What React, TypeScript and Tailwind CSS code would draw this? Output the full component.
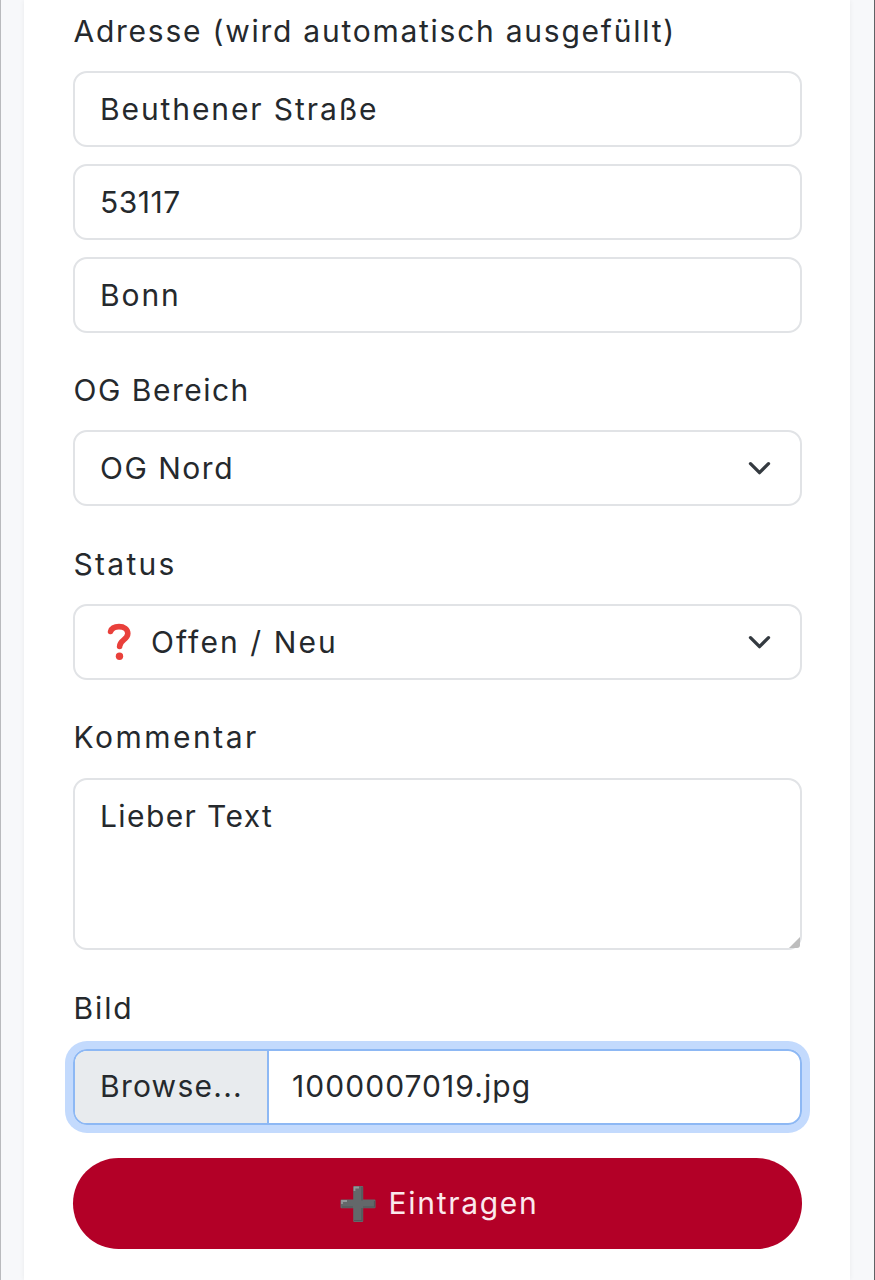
import type { ReactNode } from "react";

function Label({ children, className }: { children: ReactNode; className: string }) {
  return <label className={`block whitespace-nowrap pl-[0.5px] leading-[40px] ${className}`}>{children}</label>;
}

const box =
  "block h-[76px] w-full rounded-[14px] border-2 border-[#e1e3e6] bg-white px-[25px] leading-[72px] outline-none";

function Chevron() {
  return (
    <svg width="24" height="24" viewBox="0 0 24 24" fill="none" stroke="#343a40" strokeWidth="3.3" strokeLinecap="round" strokeLinejoin="round">
      <path d="M2.5 7.7l9 9 9-9" />
    </svg>
  );
}

function QuestionMark() {
  return (
    <svg width="24" height="38" viewBox="0 0 24 38" fill="none">
      <path d="M3.6 8.5C4.7 4.9 7.8 3.6 12 3.6c5 0 8.800 2.600 8.800 6.900 0 6.300-8.200 6.500-8.200 13" stroke="#e9403b" strokeWidth="5.6" strokeLinecap="round" />
      <circle cx="12.5" cy="33.2" r="3.7" fill="#e9403b" />
    </svg>
  );
}

function Plus() {
  return (
    <svg width="36" height="38" viewBox="0 0 36 38">
      <path d="M14.2 1h8q1 0 1 1v12.5h11.3q1 0 1 1v6.8q0 1-1 1H23.2v12.7q0 1-1 1h-8q-1 0-1-1V23.3H1.5q-1 0-1-1v-6.8q0-1 1-1h11.7V2q0-1 1-1z" fill="#63686a" />
      <path d="M14.5 6V2.5H19M2 19v-3h5" fill="none" stroke="#92989a" strokeWidth="1.8" />
      <path d="M22 2v13.5M22 23v12.5h-8M34.5 16v6H23M2 22h11" fill="none" stroke="#505759" strokeWidth="1.2" />
    </svg>
  );
}

export default function App() {
  return (
    <div className="flex h-[1280px] w-full overflow-hidden border-l border-r border-l-[#b9babd] border-r-[#606265] bg-[#f7f8fa] pl-[23px] pr-[24px] font-['Inter',sans-serif] text-[30px] text-[#25292d]">
      <main className="w-full bg-white pl-[49px] pr-[48px] pt-[11px] shadow-[0_0_5px_rgba(0,0,0,0.06)]">
        <Label className="mb-[20px] tracking-[1.75px]">Adresse (wird automatisch ausgefüllt)</Label>
        <div className="flex flex-col gap-[17px]">
          <input className={`${box} tracking-[1.9px]`} defaultValue="Beuthener Straße" />
          <input className={`${box} tracking-[0.5px]`} defaultValue="53117" />
          <input className={`${box} tracking-[1.9px]`} defaultValue="Bonn" />
        </div>
        <Label className="mb-[20px] mt-[37px] tracking-[1.5px]">OG Bereich</Label>
        <div className={`${box} flex! items-center justify-between pr-[28px]! tracking-[1.5px]`}>
          <span>OG Nord</span>
          <Chevron />
        </div>
        <Label className="mb-[20px] mt-[38px] tracking-[2.3px]">Status</Label>
        <div className={`${box} flex! items-center justify-between pr-[28px]! tracking-[2.1px]`}>
          <span className="flex items-center gap-[20px] pl-[7px]">
            <QuestionMark />
            <span>Offen / Neu</span>
          </span>
          <Chevron />
        </div>
        <Label className="mb-[21px] mt-[37px] tracking-[2.5px]">Kommentar</Label>
        <div className="relative h-[172px]">
          <textarea className="block h-[172px] w-full resize-none rounded-[14px] border-2 border-[#e1e3e6] bg-white px-[25px] py-[16px] leading-[40px] tracking-[1.4px] outline-none" defaultValue="Lieber Text" />
          <svg className="absolute bottom-[2px] right-[2px]" width="11" height="11" viewBox="0 0 11 11">
            <path d="M11 0v8q0 3-3 3H0z" fill="#bdbdbd" />
          </svg>
        </div>
        <Label className="mb-[21px] mt-[38px] tracking-[1.9px]">Bild</Label>
        <div className="flex h-[76px] w-full overflow-hidden rounded-[14px] border-2 border-[#8db8f4] leading-[71px] shadow-[0_0_0_8px_#c3dafd]">
          <span className="w-[194px] shrink-0 border-r-2 border-[#8db8f4] bg-[#e8ebee] pl-[25px] tracking-[1.25px]">Browse...</span>
          <span className="pl-[23px] tracking-[1.05px]">1000007019.jpg</span>
        </div>
        <button className="mt-[33px] flex h-[91px] w-full items-center justify-center gap-[13px] rounded-full bg-[#b30027] pl-[3px] text-[#fbe9ed]">
          <Plus />
          <span className="tracking-[1.7px]">Eintragen</span>
        </button>
      </main>
    </div>
  );
}
